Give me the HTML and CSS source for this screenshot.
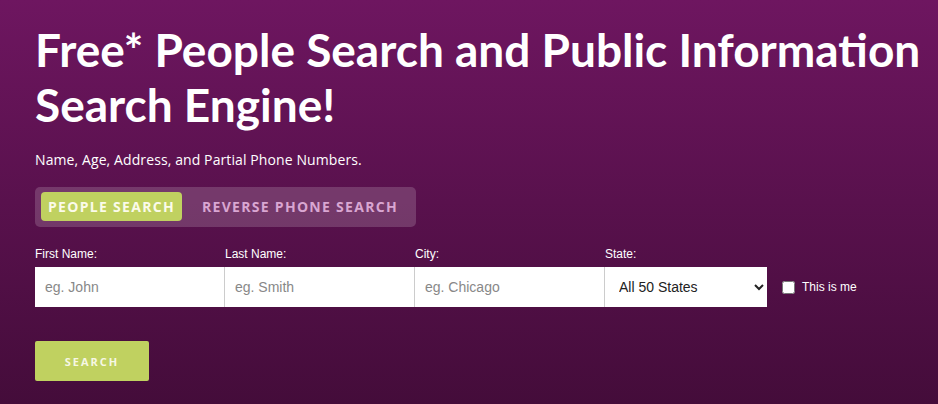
FILE: index.html
```html
<!DOCTYPE html>
<html lang="en">
<head>
    <meta charset="UTF-8">
    <meta name="viewport" content="width=device-width, initial-scale=1.0">
    <title>Free People Search</title>
    <link rel="stylesheet" href="styles.css">
</head>
<body>

    <div class="hero">
        <h1>Free* People Search and Public Information Search Engine!</h1>
        <p class="sub">Name, Age, Address, and Partial Phone Numbers.</p>

        <div class="tabs">
            <button type="button" class="tab active">PEOPLE SEARCH</button>
            <button type="button" class="tab">REVERSE PHONE SEARCH</button>
        </div>

        <form class="search-form">
            <div class="fields">
                <div class="field">
                    <label>First Name:</label>
                    <input type="text" placeholder="eg. John">
                </div>
                <div class="field">
                    <label>Last Name:</label>
                    <input type="text" placeholder="eg. Smith">
                </div>
                <div class="field">
                    <label>City:</label>
                    <input type="text" placeholder="eg. Chicago">
                </div>
                <div class="field state">
                    <label>State:</label>
                    <select>
                        <option>All 50 States</option>
                    </select>
                </div>
                <label class="me"><input type="checkbox"> This is me</label>
            </div>
            <button type="button" class="btn">SEARCH</button>
        </form>
    </div>

</body>
</html>
```

FILE: styles.css
```css
body {
    margin: 0;
    font-family: 'Open Sans', sans-serif;
}
.hero {
    height: 404px;
    box-sizing: border-box;
    padding: 22px 0 0 35px;
    background: linear-gradient(to bottom, #6e1660, #440c3a);
    color: white;
    overflow: hidden;
}
h1 {
    margin: 0;
    font-family: 'Lato', sans-serif;
    font-weight: 700;
    font-size: 46px;
    line-height: 55px;
}
.sub {
    margin: 18px 0 18px;
    font-size: 14px;
    letter-spacing: 0.1px;
}
.tabs {
    display: inline-flex;
    gap: 13px;
    padding: 5px 11px 6px 6px;
    background: rgba(255, 255, 255, 0.17);
    border-radius: 5px;
}
.tab {
    border: none;
    background: none;
    padding: 0 7px;
    height: 29px;
    font-family: 'Open Sans', sans-serif;
    font-weight: 700;
    font-size: 14px;
    letter-spacing: 1.3px;
    color: #d9a6d2;
    border-radius: 4px;
}
.tab.active {
    background: #c0d160;
    color: #fbfbea;
}
.search-form {
    margin-top: 20px;
}
.fields {
    display: flex;
    align-items: flex-end;
}
.field {
    display: flex;
    flex-direction: column;
    width: 190px;
}
.field.state {
    width: 162px;
}
.field label {
    font-family: 'Liberation Sans', sans-serif;
    font-size: 12px;
    margin-bottom: 6px;
}
.field input,
.field select {
    height: 40px;
    box-sizing: border-box;
    border: none;
    border-right: 1px solid #cccccc;
    padding: 0 10px;
    font-family: 'Liberation Sans', sans-serif;
    font-size: 14px;
    color: #333333;
    background: white;
    outline: none;
}
.field input::placeholder {
    color: #888888;
}
.field select {
    border-right: none;
    color: #222222;
}
.me {
    display: flex;
    align-items: center;
    gap: 7px;
    height: 40px;
    margin-left: 15px;
    font-family: 'Liberation Sans', sans-serif;
    font-size: 12px;
}
.me input {
    width: 13px;
    height: 13px;
    margin: 0;
}
.btn {
    margin-top: 34px;
    width: 114px;
    height: 40px;
    border: none;
    border-radius: 2px;
    background: #c0d160;
    color: #f6f7e4;
    font-family: 'Open Sans', sans-serif;
    font-weight: 700;
    font-size: 11px;
    letter-spacing: 2px;
    cursor: pointer;
}
```
